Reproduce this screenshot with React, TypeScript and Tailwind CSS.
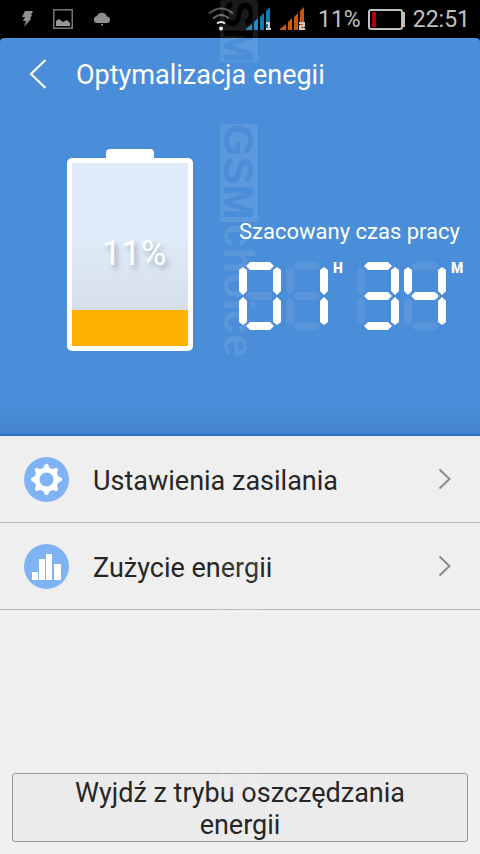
import { useId, useState } from "react";

// segment order: top, top-left, top-right, middle, bottom-left, bottom-right, bottom
const SEGMENTS = [
  "7,4 11,0 31,0 35,4 31,8 11,8",
  "4,5 8,8 8,29 4,33 0,29 0,8",
  "38,5 42,8 42,29 38,33 34,29 34,8",
  "7,34 11,30 31,30 35,34 31,38 11,38",
  "4,35 8,39 8,60 4,63 0,60 0,39",
  "38,35 42,39 42,60 38,63 34,60 34,39",
  "7,64 11,60 31,60 35,64 31,68 11,68",
];

const DIGITS: Record<string, string> = {
  "0": "1110111",
  "1": "0010010",
  "2": "1011101",
  "3": "1011011",
  "4": "0111010",
  "5": "1101011",
  "6": "1101111",
  "7": "1010010",
  "8": "1111111",
  "9": "1111011",
};

function Digit({ value }: { value: string }) {
  return (
    <svg width="42" height="68" viewBox="0 0 42 68" aria-hidden="true">
      {SEGMENTS.map((points, i) => (
        <polygon
          key={i}
          points={points}
          fill="#fff"
          fillOpacity={DIGITS[value][i] === "1" ? 1 : 0.08}
        />
      ))}
    </svg>
  );
}

function TimeGroup({ value, unit }: { value: string; unit: string }) {
  return (
    <div className="flex gap-[5px]" role="img" aria-label={value + unit}>
      {value.split("").map((d, i) => (
        <Digit key={i} value={d} />
      ))}
      <span className="w-3 text-sm leading-3 font-black">{unit}</span>
    </div>
  );
}

function Signal({ color, sim }: { color: string; sim: string }) {
  return (
    <svg width="26" height="24" viewBox="0 0 26 24" aria-hidden="true">
      <g fill={color}>
        <path d="M0 23V22L6 17V23Z" />
        <path d="M8 23V15L12 11V23Z" />
        <path d="M14 23V10L18 6V23Z" />
        <path d="M20 23V4L24 0V23Z" />
      </g>
      {sim === "1" ? (
        <path d="M20 16H23V22M20 22H25" fill="none" stroke="#ccc" strokeWidth="2" />
      ) : (
        <path d="M19 16H24V19H20V22H25" fill="none" stroke="#ccc" strokeWidth="2" />
      )}
    </svg>
  );
}

function StatusBar() {
  return (
    <div className="flex h-[38px] items-center bg-black pl-[22px] pr-[10px] text-[23px] text-[#c0c0c0]">
      <div className="flex items-center gap-5 text-[#8f8f8f]">
        <svg width="11" height="16" viewBox="0 0 11 16" fill="currentColor">
          <path d="M3 0H11L9 4H10L8 8H9L2 16L4 10H1L3 6H0Z" />
        </svg>
        <svg width="20" height="20" viewBox="0 0 20 20">
          <rect x=".75" y=".75" width="18.500" height="18.500" fill="none" stroke="#777" strokeWidth="1.500" />
          <path d="M3 17V12L6 10L10 13L14 11L17 14V17Z" fill="#999" />
        </svg>
        <svg width="18" height="14" viewBox="0 0 18 14" fill="currentColor">
          <path d="M3.500 11A3.400 3.400 0 0 1 3.800 4.300A5.400 5.400 0 0 1 14 4.500A3.300 3.300 0 0 1 14.500 11Z" />
          <circle cx="9" cy="12.800" r="1" />
        </svg>
      </div>
      <div className="ml-auto flex items-center">
        <svg width="26" height="24" viewBox="0 0 26 24" fill="none" strokeWidth="2">
          <path d="M1 6.500Q13 -3.500 25 6.500" stroke="#555" />
          <path d="M5 11.500Q13 4.500 21 11.500" stroke="#666" />
          <path d="M9 16.500Q13 13.500 17 16.500" stroke="#eee" />
          <circle cx="13" cy="21.500" r="2" fill="#eee" />
        </svg>
        <div className="ml-3 flex gap-2">
          <Signal color="#0b80b8" sim="1" />
          <Signal color="#cb560c" sim="2" />
        </div>
        <span className="ml-3 pt-0.5">11%</span>
        <svg className="mx-[7px]" width="37" height="21" viewBox="0 0 37 21">
          <rect x="1" y="1" width="33" height="19" rx="2" fill="none" stroke="#c0c0c0" strokeWidth="2" />
          <rect x="34" y="3" width="3" height="15" fill="#c0c0c0" />
          <rect x="4" y="3" width="4" height="15" fill="#b40008" />
        </svg>
        <span className="pl-px pt-0.5">22:51</span>
      </div>
    </div>
  );
}

function Battery({ level }: { level: string }) {
  return (
    <div className="flex w-[126px] flex-col items-center">
      <div className="h-[9px] w-12 rounded-t-sm bg-white" />
      <div className="relative flex h-[193px] w-full flex-col justify-end rounded-[5px] border-[5px] border-white bg-linear-to-b from-[#dfebf8] from-40% to-[#d6dfeb] to-80%">
        <div className="h-9 bg-[#ffb300]" />
        <span className="absolute inset-0 flex items-center justify-center pl-2 text-[35px] text-white [text-shadow:3px_4px_5px_rgba(60,70,80,0.35)]">
          {level}
        </span>
      </div>
    </div>
  );
}

function GearIcon() {
  return (
    <svg width="45" height="45" viewBox="0 0 45 45" aria-hidden="true">
      <circle cx="22.500" cy="22.500" r="22.500" fill="#7fb3f3" />
      <g fill="#fff">
        {[0, 45, 90, 135, 180, 225, 270, 315].map((a) => (
          <path
            key={a}
            d="M17 13Q20 11 20.500 8.500Q20.500 7 22.500 7Q24.500 7 24.500 8.500Q25 11 28 13Z"
            transform={`rotate(${a} 22.500 22.500)`}
          />
        ))}
        <circle cx="22.500" cy="22.500" r="12" />
      </g>
      <circle cx="22.500" cy="22.500" r="7" fill="#7fb3f3" />
    </svg>
  );
}

function ChartIcon() {
  return (
    <svg width="45" height="45" viewBox="0 0 45 45" aria-hidden="true">
      <circle cx="22.500" cy="22.500" r="22.500" fill="#7fb3f3" />
      <path d="M8 28H14V36H8ZM15 15H21V36H15ZM22 10H28V36H22ZM30 20H37V36H30Z" fill="#fff" />
    </svg>
  );
}

function MenuRow({ icon, label }: { icon: React.ReactNode; label: string }) {
  return (
    <li className="border-b border-[#b8b8b8]">
      <a href="#" className="flex h-[86px] items-center gap-6 pl-6 pr-[29px] text-[27px] text-[#262626]">
        {icon}
        <span className="flex-1 pt-1">{label}</span>
        <svg width="13" height="22" viewBox="0 0 13 22" fill="none" stroke="#8a8a8a" strokeWidth="2">
          <path d="M1.500 1.500L11.500 11L1.500 20.500" />
        </svg>
      </a>
    </li>
  );
}

function Watermark({ badge = "GSM", size = 98, tail = "" }) {
  const id = useId();
  return (
    <svg
      width="38"
      height={tail ? 236 : size}
      className="overflow-visible font-['Liberation_Sans',sans-serif] text-[42px] font-bold"
      fill="#fff"
      fillOpacity=".1"
      aria-hidden="true"
    >
      <mask id={id}>
        <rect width="38" height={size} fill="#fff" fillOpacity="1" />
        <text transform="translate(4 0) rotate(90)" fill="#000" fillOpacity="1">
          {badge}
        </text>
      </mask>
      <rect width="38" height={size} rx="3" mask={`url(#${id})`} />
      {tail && <text transform={`translate(4 ${size + 2}) rotate(90)`}>{tail}</text>}
    </svg>
  );
}

export default function App() {
  const [saving, setSaving] = useState(true);

  return (
    <div className="relative flex min-h-screen flex-col bg-[#efefef] font-['Roboto',sans-serif]">
      <StatusBar />

      <div className="bg-black">
        <header className="rounded-t-[4px] border-b-2 border-[#2f70c8] bg-linear-to-b from-[#4a8dd8] from-92% to-[#4585cf] pb-[83px] text-white">
          <div className="flex h-[72px] items-center gap-[29px] pl-[29px]">
            <button type="button" aria-label="Wstecz">
              <svg width="18" height="30" viewBox="0 0 18 30" fill="none" stroke="#fff" strokeWidth="2.200">
                <path d="M16.500 1L2 15L16.500 29" />
              </svg>
            </button>
            <h1 className="pt-0.5 text-[27px]">Optymalizacja enegii</h1>
          </div>

          <div className="flex gap-[46px] pl-[67px] pt-[39px]">
            <Battery level="11%" />
            <div className="pt-[71px]">
              <p className="text-[22px] leading-6 whitespace-nowrap">Szacowany czas pracy</p>
              <div className="mt-[18px] flex gap-3">
                <TimeGroup value="01" unit="H" />
                <TimeGroup value="34" unit="M" />
              </div>
            </div>
          </div>
        </header>
      </div>

      <ul>
        <MenuRow icon={<GearIcon />} label="Ustawienia zasilania" />
        <MenuRow icon={<ChartIcon />} label="Zużycie energii" />
      </ul>

      <button
        type="button"
        aria-pressed={saving}
        onClick={() => setSaving(!saving)}
        className="mx-3 mt-auto mb-3 rounded-[3px] border border-[#999] bg-[#ebebeb] px-10 pt-[3px] text-[27px] leading-8 text-[#262626]"
      >
        Wyjdź z trybu oszczędzania energii
      </button>

      <div className="pointer-events-none absolute top-0 left-[220px]">
        <Watermark badge="SM" size={62} />
      </div>
      <div className="pointer-events-none absolute top-[124px] left-[220px]">
        <Watermark tail="choice" />
      </div>
      <div className="pointer-events-none absolute top-[533px] left-[220px]">
        <Watermark />
      </div>
      <div className="pointer-events-none absolute top-[694px] left-[220px]">
        <Watermark />
      </div>
    </div>
  );
}
